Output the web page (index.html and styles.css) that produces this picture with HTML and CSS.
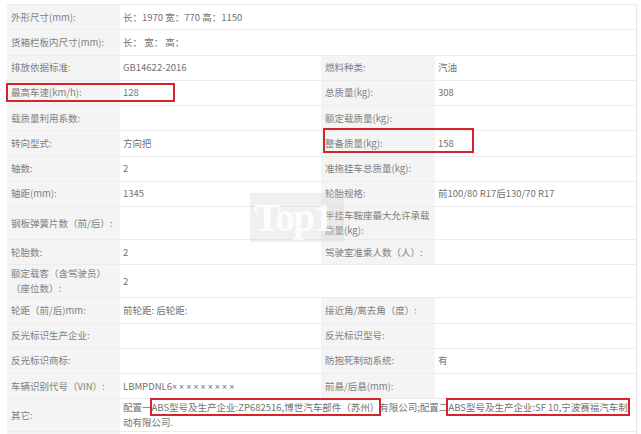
FILE: index.html
```html
<!DOCTYPE html>
<html lang="zh-CN">
<head>
    <meta charset="UTF-8">
    <meta name="viewport" content="width=device-width, initial-scale=1.0">
    <title>车辆参数</title>
    <link rel="stylesheet" href="styles.css">
</head>
<body>
    <div class="sheet">
        <table class="params">
            <colgroup>
                <col class="c-label">
                <col class="c-value">
                <col class="c-label2">
                <col class="c-value">
            </colgroup>
            <tr>
                <td class="lbl">外形尺寸(mm):</td>
                <td colspan="3">长：1970 宽：770 高：1150</td>
            </tr>
            <tr>
                <td class="lbl">货箱栏板内尺寸(mm):</td>
                <td colspan="3">长：&nbsp;宽：&nbsp;高：</td>
            </tr>
            <tr>
                <td class="lbl">排放依据标准:</td>
                <td>GB14622-2016</td>
                <td class="lbl">燃料种类:</td>
                <td>汽油</td>
            </tr>
            <tr>
                <td class="lbl">最高车速(km/h):</td>
                <td>128</td>
                <td class="lbl">总质量(kg):</td>
                <td>308</td>
            </tr>
            <tr>
                <td class="lbl">载质量利用系数:</td>
                <td></td>
                <td class="lbl">额定载质量(kg):</td>
                <td></td>
            </tr>
            <tr>
                <td class="lbl">转向型式:</td>
                <td>方向把</td>
                <td class="lbl">整备质量(kg):</td>
                <td>158</td>
            </tr>
            <tr>
                <td class="lbl">轴数:</td>
                <td>2</td>
                <td class="lbl">准拖挂车总质量(kg):</td>
                <td></td>
            </tr>
            <tr>
                <td class="lbl">轴距(mm):</td>
                <td>1345</td>
                <td class="lbl">轮胎规格:</td>
                <td>前100/80 R17后130/70 R17</td>
            </tr>
            <tr>
                <td class="lbl">钢板弹簧片数（前/后）:</td>
                <td></td>
                <td class="lbl">半挂车鞍座最大允许承载质量(kg):</td>
                <td></td>
            </tr>
            <tr>
                <td class="lbl">轮胎数:</td>
                <td>2</td>
                <td class="lbl">驾驶室准乘人数（人）:</td>
                <td></td>
            </tr>
            <tr>
                <td class="lbl">额定载客（含驾驶员）（座位数）:</td>
                <td>2</td>
                <td></td>
                <td></td>
            </tr>
            <tr>
                <td class="lbl">轮距（前/后)mm:</td>
                <td>前轮距: 后轮距:</td>
                <td class="lbl">接近角/离去角（度）:</td>
                <td></td>
            </tr>
            <tr>
                <td class="lbl">反光标识生产企业:</td>
                <td></td>
                <td class="lbl">反光标识型号:</td>
                <td></td>
            </tr>
            <tr>
                <td class="lbl">反光标识商标:</td>
                <td></td>
                <td class="lbl">防抱死制动系统:</td>
                <td>有</td>
            </tr>
            <tr>
                <td class="lbl">车辆识别代号（VIN）:</td>
                <td>LBMPDNL6<span class="mask">×××××××××</span></td>
                <td class="lbl">前悬/后悬(mm):</td>
                <td></td>
            </tr>
            <tr>
                <td class="lbl">其它:</td>
                <td colspan="3">配置一<span class="hl">ABS型号及生产企业:ZP682516,博世汽车部件（苏州）</span>有限公司;配置二<span class="hl">ABS型号及生产企业:SF 10,宁波赛福汽车制</span>动有限公司.</td>
            </tr>
            <tr>
                <td class="lbl"></td>
                <td colspan="3"></td>
            </tr>
        </table>

        <div class="mark mark-speed"></div>
        <div class="mark mark-weight"></div>
        <div class="watermark">Top1</div>
    </div>
</body>
</html>
```

FILE: styles.css
```css
body {
    margin: 0;
    background: #fff;
    font-family: "Noto Sans CJK SC", "Noto Sans", sans-serif;
    font-size: 9.5px;
    color: #727272;
}
.sheet {
    position: relative;
    margin: 4px 0 0 7px;
    width: 629px;
}
.params {
    width: 629px;
    table-layout: fixed;
    border-collapse: separate;
    border-spacing: 0;
    border-top: 1px solid #ececec;
    border-right: 1px solid #e6e6e6;
}
.c-label { width: 113px; }
.c-label2 { width: 114px; }
.c-value { width: 201px; }
.params td {
    box-sizing: border-box;
    height: 25.25px;
    padding: 1px 3px;
    line-height: 15px;
    border-bottom: 1px solid #ececec;
    vertical-align: middle;
    word-break: break-all;
}
.params td.lbl {
    background: #f4f4f4;
    color: #808080;
    padding-left: 4px;
}
.mask {
    font-family: "Noto Sans", sans-serif;
    font-size: 9px;
    letter-spacing: 2px;
}
.hl {
    outline: 2px solid #d4242c;
}
.mark {
    position: absolute;
    border: 2px solid #d4242c;
}
.mark-speed {
    left: -1px;
    top: 79px;
    width: 165px;
    height: 15px;
}
.mark-weight {
    left: 316px;
    top: 124px;
    width: 147px;
    height: 21px;
}
.watermark {
    position: absolute;
    left: 243px;
    top: 189px;
    width: 94px;
    height: 49px;
    box-sizing: border-box;
    padding-left: 4px;
    background: rgba(200, 200, 200, 0.28);
    font-family: "Liberation Serif", serif;
    font-weight: bold;
    font-size: 40px;
    line-height: 49px;
    letter-spacing: -2px;
    color: rgba(255, 255, 255, 0.9);
    white-space: nowrap;
}
```
